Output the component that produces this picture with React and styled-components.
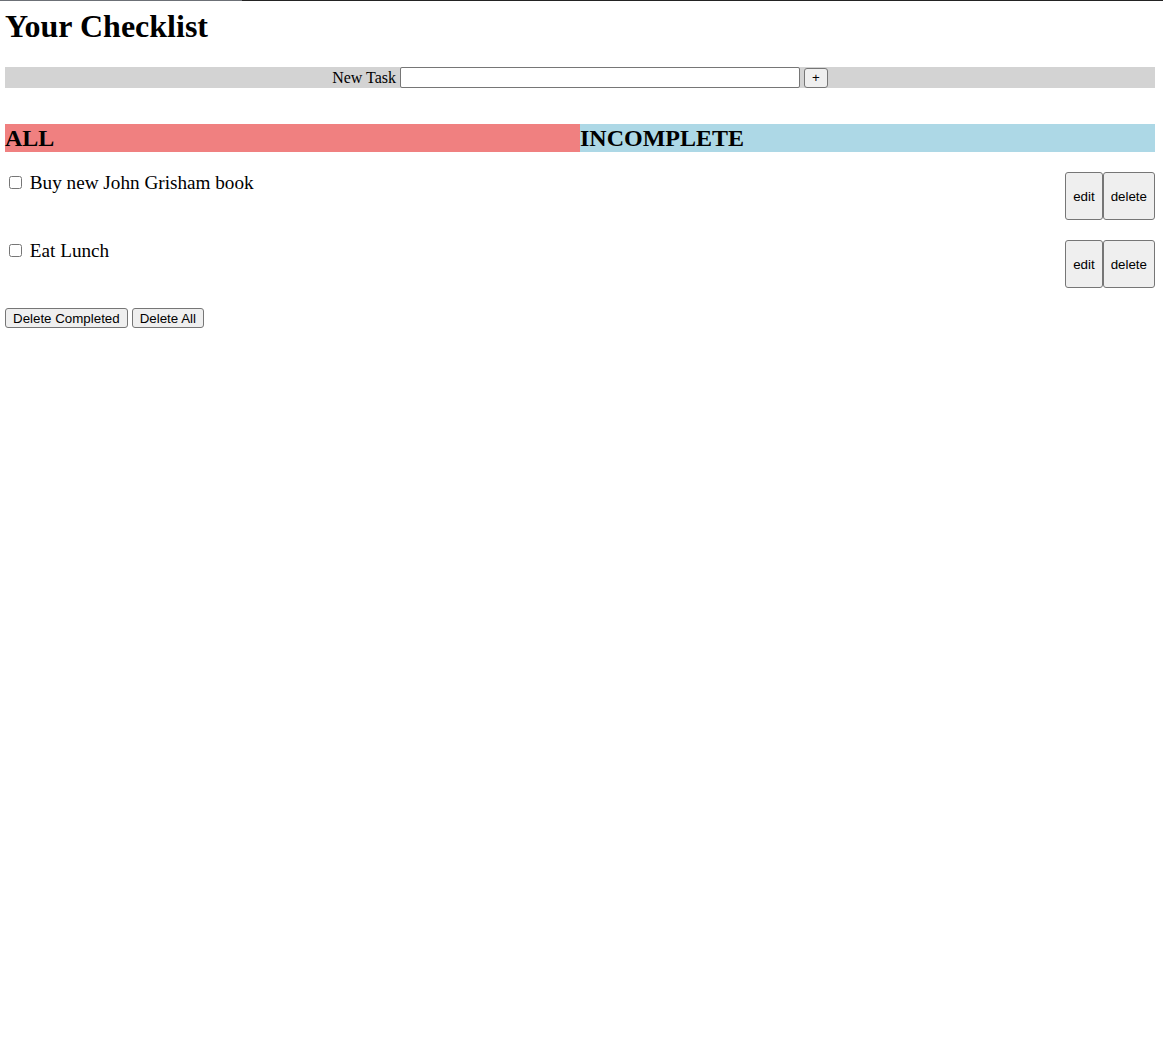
import React from 'react';
import styled, { createGlobalStyle } from 'styled-components'

const GlobalStyle = createGlobalStyle`
  body {
    margin: 0;
    background: #fff;
    font-family: "Liberation Serif", "Times New Roman", serif;
    color: #000;
  }
`
const TopLine = styled.div`
  display: flex;
  height: 1px;
`
const LineSegment = styled.div`
  background: ${props => props.dark ? '#232323' : '#6c7076'};
  flex: ${props => props.dark ? '1' : '0 0 242px'};
`
const Page = styled.div`
  padding: 0 8px 0 5px;
`
const Title = styled.h1`
  font-size: 32px;
  font-weight: bold;
  line-height: 37px;
  margin: 7px 0 22px;
`
const NewTaskBar = styled.form`
  align-items: center;
  background: #d3d3d3;
  display: flex;
  gap: 4px;
  height: 21px;
  justify-content: center;
  margin-bottom: 36px;
`
const Label = styled.label`
  font-size: 16px;
`
const TaskInput = styled.input`
  background: #fff;
  border: 1px solid #767676;
  border-radius: 2px;
  box-sizing: border-box;
  height: 21px;
  padding: 1px 2px;
  width: 400px;
`
const Button = styled.button`
  background: #efefef;
  border: 1px solid #767676;
  border-radius: 3px;
  box-sizing: border-box;
  color: #000;
  font-family: "Liberation Sans", Arial, sans-serif;
  font-size: 13.333px;
  height: ${props => props.tall ? '48px' : '20px'};
  padding: 1px 7px;
`
const Tabs = styled.div`
  display: grid;
  grid-template-columns: 1fr 1fr;
`
const Tab = styled.h2`
  background: ${props => props.color};
  font-size: 24px;
  font-weight: bold;
  line-height: 28px;
  margin: 0;
`
const TaskList = styled.ul`
  display: flex;
  flex-direction: column;
  gap: 20px;
  list-style: none;
  margin: 20px 0;
  padding: 0;
`
const TaskRow = styled.li`
  align-items: flex-start;
  display: flex;
  height: 48px;
  justify-content: space-between;
`
const TaskLabel = styled.label`
  font-size: 19.2px;
  line-height: 22px;
`
const Checkbox = styled.input`
  height: 13px;
  margin: 3px 3px 3px 4px;
  width: 13px;
`
const Actions = styled.div`
  display: flex;
`
const Footer = styled.div`
  display: flex;
  gap: 4px;
`

const tasks = ['Buy new John Grisham book', 'Eat Lunch']

export default function App() {
  return (
    <>
      <GlobalStyle />
      <TopLine>
        <LineSegment />
        <LineSegment dark />
      </TopLine>
      <Page>
        <Title>Your Checklist</Title>
        <NewTaskBar onSubmit={e => e.preventDefault()}>
          <Label htmlFor="new-task">New Task</Label>
          <TaskInput id="new-task" type="text" />
          <Button type="submit">+</Button>
        </NewTaskBar>
        <Tabs>
          <Tab color="#f08080">ALL</Tab>
          <Tab color="#add8e6">INCOMPLETE</Tab>
        </Tabs>
        <TaskList>
          {tasks.map(task => (
            <TaskRow key={task}>
              <TaskLabel>
                <Checkbox type="checkbox" /> {task}
              </TaskLabel>
              <Actions>
                <Button tall>edit</Button>
                <Button tall>delete</Button>
              </Actions>
            </TaskRow>
          ))}
        </TaskList>
        <Footer>
          <Button>Delete Completed</Button>
          <Button>Delete All</Button>
        </Footer>
      </Page>
    </>
  );
}
